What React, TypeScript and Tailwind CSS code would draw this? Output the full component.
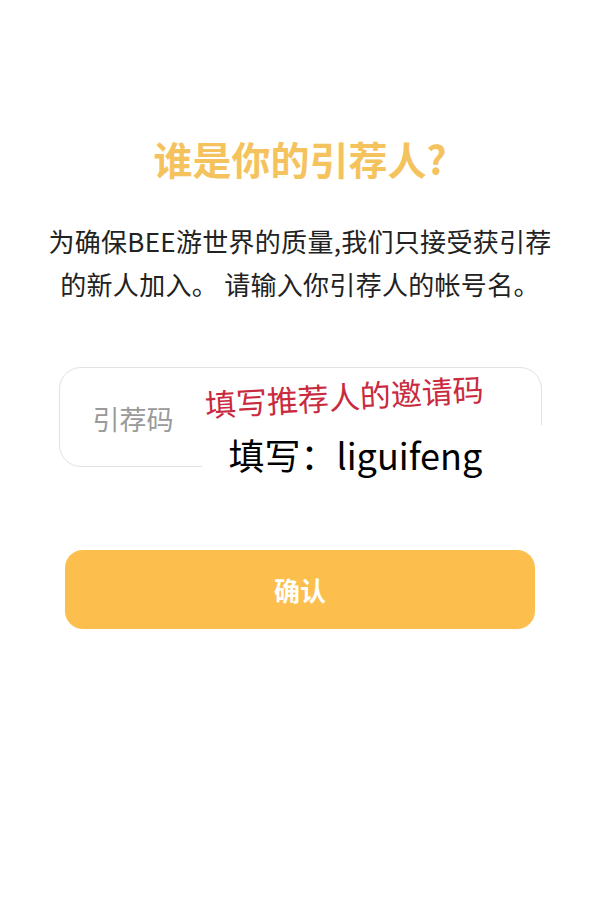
import React from "react";

export default function App() {
  return (
    <div
      className="w-[600px] min-h-[901px] bg-white flex flex-col items-center"
      style={{ fontFamily: '"Noto Sans CJK SC", "Noto Sans", sans-serif' }}
    >
      <h1 className="mt-[133px] text-[39px] leading-[50px] font-bold text-[#f5c35e]">
        谁是你的引荐人?
      </h1>
      <p className="mt-[36px] text-[26px] leading-[43px] text-[#222222] text-center tracking-[0.3px]">
        为确保BEE游世界的质量,我们只接受获引荐
        <br />
        的新人加入。 请输入你引荐人的帐号名。
      </p>
      <div className="relative mt-[62px] w-[483px] h-[100px] rounded-[22px] border-[1.5px] border-[#e2e2e2] flex items-center pl-[33px]">
        <span className="text-[27px] text-[#9a9a9a] mt-[5px]">引荐码</span>
        <div className="absolute left-[145px] top-[16px] origin-left -rotate-[3.3deg] text-[31px] leading-[40px] text-[#c92a3e] whitespace-nowrap">
          填写推荐人的邀请码
        </div>
        <div className="absolute left-[142px] top-[57px] w-[345px] h-[58px] bg-white pl-[27px] flex items-center text-[36px] text-black whitespace-nowrap">
          填写：liguifeng
        </div>
      </div>
      <button className="mt-[83px] w-[470px] h-[79px] rounded-[18px] bg-[#fcbe4c] text-white text-[26px] font-bold">
        确认
      </button>
    </div>
  );
}
